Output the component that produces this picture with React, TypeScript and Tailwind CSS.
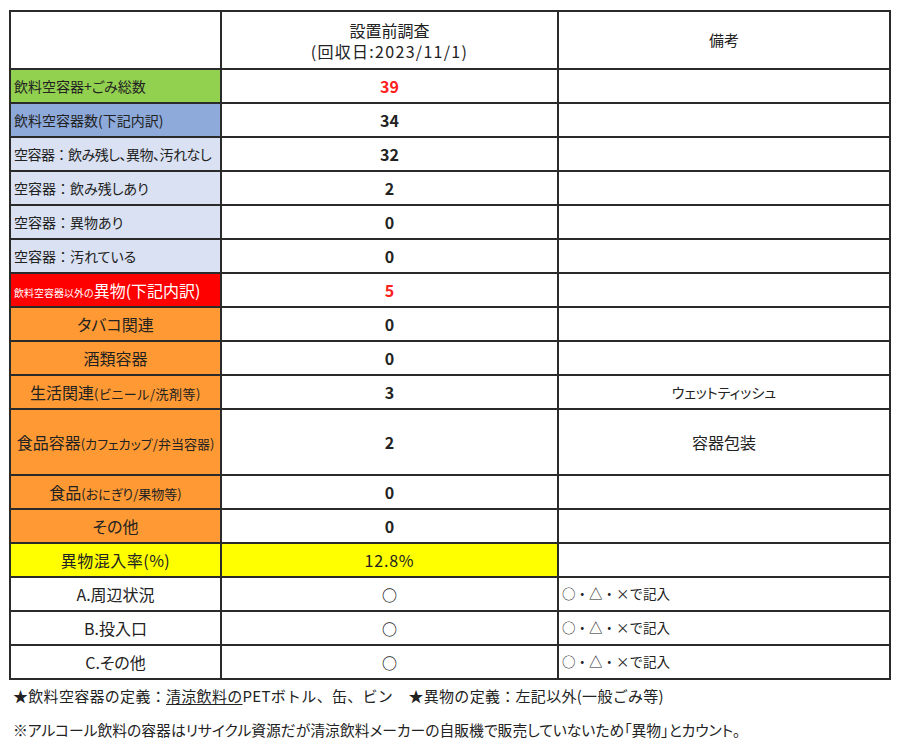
import React from "react";

const F: React.CSSProperties = {
  fontFamily: '"Noto Sans CJK JP", "Noto Sans", sans-serif',
  fontFeatureSettings: '"palt"',
};
const NOPALT: React.CSSProperties = { fontFeatureSettings: "normal" };

type Row = {
  label: React.ReactNode;
  labelCls: string;
  value: React.ReactNode;
  valueCls?: string;
  note?: React.ReactNode;
  noteCls?: string;
  h?: string;
};

const small = (t: string) => <span className="text-[13px]">{t}</span>;
const colon = <span style={NOPALT}>：</span>;
const light = "bg-[#d9e1f2] text-left pl-[3px] text-[14px]";
const orange = "bg-[#ff9933] text-center text-[16px]";
const num = "font-bold text-[16px]";
const mark = <span className="font-bold text-[15px]">○</span>;
const note = <span style={NOPALT}>○・△・×で記入</span>;
const noteCls = "text-left pl-[3px] text-[13.5px]";

const rows: Row[] = [
  { label: "飲料空容器+ごみ総数", labelCls: "bg-[#92d050] text-left pl-[3px] text-[14px]", value: "39", valueCls: `${num} text-[#ff2020]` },
  { label: "飲料空容器数(下記内訳)", labelCls: "bg-[#8eaadb] text-left pl-[3px] text-[14px]", value: "34", valueCls: num },
  { label: (<>空容器{colon}飲み残し、異物、汚れなし</>), labelCls: `${light} tracking-[-0.5px]`, value: "32", valueCls: num },
  { label: (<>空容器{colon}飲み残しあり</>), labelCls: light, value: "2", valueCls: num },
  { label: (<>空容器{colon}異物あり</>), labelCls: light, value: "0", valueCls: num },
  { label: (<>空容器{colon}汚れている</>), labelCls: light, value: "0", valueCls: num },
  {
    label: (
      <>
        <span className="text-[10px]">飲料空容器以外の</span>
        <span className="text-[16px]">異物(下記内訳)</span>
      </>
    ),
    labelCls: "bg-[#ff0000] text-white text-left pl-[3px]",
    value: "5",
    valueCls: `${num} text-[#ff2020]`,
  },
  { label: "タバコ関連", labelCls: orange, value: "0", valueCls: num },
  { label: "酒類容器", labelCls: orange, value: "0", valueCls: num },
  {
    label: (<>生活関連<span className="tracking-[0.5px]">{small("(ビニール/洗剤等)")}</span></>),
    labelCls: orange,
    value: "3",
    valueCls: num,
    note: "ウェットティッシュ",
    noteCls: "text-center text-[14px]",
  },
  {
    label: (<>食品容器{small("(カフェカップ/弁当容器)")}</>),
    labelCls: orange,
    value: "2",
    valueCls: num,
    note: "容器包装",
    noteCls: "text-center text-[16px]",
    h: "h-[66px]",
  },
  {
    label: (<>食品{small("(おにぎり/果物等)")}</>),
    labelCls: orange,
    value: "0",
    valueCls: num,
  },
  { label: "その他", labelCls: orange, value: "0", valueCls: num },
  { label: "異物混入率(%)", labelCls: "bg-[#ffff00] text-center text-[16px] tracking-[0.5px]", value: "12.8%", valueCls: "text-[16px] tracking-[0.8px] bg-[#ffff00]" },
  { label: "A.周辺状況", labelCls: "text-center text-[16px]", value: mark, note, noteCls },
  { label: "B.投入口", labelCls: "text-center text-[16px]", value: mark, note, noteCls },
  { label: "C.その他", labelCls: "text-center text-[16px]", value: mark, note, noteCls },
];

export default function App() {
  return (
    <div className="w-[900px] h-[753px] bg-white text-[#222]" style={F}>
      <div className="pt-[10px] pl-[9px]">
        <table className="border-collapse w-[880px] table-fixed border-2 border-[#2a2a2a]">
          <colgroup>
            <col className="w-[211px]" />
            <col className="w-[337px]" />
            <col className="w-[332px]" />
          </colgroup>
          <tbody>
            <tr className="h-[58px]">
              <td className="border-2 border-[#2a2a2a]"></td>
              <td className="border-2 border-[#2a2a2a] text-center text-[16px]">
                <div className="flex flex-col items-center gap-[3px] leading-[18px]">
                  <span>設置前調査</span>
                  <span className="tracking-[1.3px]">(回収日:2023/11/1)</span>
                </div>
              </td>
              <td className="border-2 border-[#2a2a2a] text-center text-[15px] align-middle">備考</td>
            </tr>
            {rows.map((r, i) => (
              <tr key={i} className={r.h ?? "h-[34px]"}>
                <td className={`border-2 border-[#2a2a2a] whitespace-nowrap leading-none ${r.labelCls}`}>{r.label}</td>
                <td className={`border-2 border-[#2a2a2a] text-center leading-none ${r.valueCls ?? ""}`}>{r.value}</td>
                <td className={`border-2 border-[#2a2a2a] leading-none whitespace-nowrap ${r.noteCls ?? ""}`}>{r.note}</td>
              </tr>
            ))}
          </tbody>
        </table>
      </div>
      <div className="pl-[13px] leading-none">
        <div className="h-[30px] flex items-center whitespace-nowrap text-[15px] tracking-[0.3px]" style={NOPALT}>
          <span>
            ★飲料空容器の定義：<span className="underline underline-offset-2">清涼飲料の</span>PETボトル、缶、ビン　★異物の定義：左記以外(一般ごみ等)
          </span>
        </div>
        <div className="h-[40px] flex items-center whitespace-nowrap text-[14.8px]">
          ※アルコール飲料の容器はリサイクル資源だが清涼飲料メーカーの自販機で販売していないため「異物」とカウント。
        </div>
      </div>
    </div>
  );
}
